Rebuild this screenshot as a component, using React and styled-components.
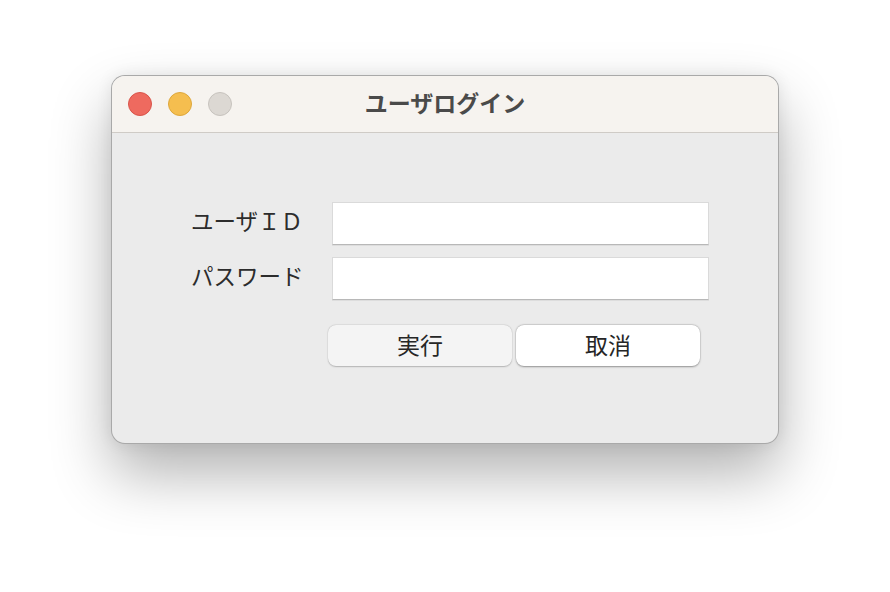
import React from "react";
import styled, { createGlobalStyle } from "styled-components";

const Global = createGlobalStyle`
  html, body { margin: 0; padding: 0; background: #ffffff; }
  body { font-family: "Noto Sans CJK JP", "Noto Sans", sans-serif; }
  * { box-sizing: border-box; }
`;

const Page = styled.div`
  width: 890px;
  height: 592px;
  padding: 75px 0 0 111px;
  background: #ffffff;
`;

const Window = styled.div`
  width: 668px;
  height: 369px;
  border-radius: 14px;
  background: #ebebeb;
  border: 1px solid rgba(0, 0, 0, 0.28);
  box-shadow: 0 30px 60px rgba(0, 0, 0, 0.3), 0 0 16px rgba(0, 0, 0, 0.08);
  overflow: hidden;
  display: flex;
  flex-direction: column;
`;

const TitleBar = styled.div`
  height: 57px;
  flex-shrink: 0;
  background: #f6f3ef;
  border-bottom: 1px solid #cfcbc6;
  display: flex;
  align-items: center;
  position: relative;
  padding-left: 16px;
`;

const Lights = styled.div`
  display: flex;
  gap: 16px;
`;

const Light = styled.span`
  width: 24px;
  height: 24px;
  border-radius: 50%;
  background: ${(p) => p.$bg};
  border: 1px solid ${(p) => p.$edge};
`;

const Title = styled.div`
  position: absolute;
  left: 0;
  right: 0;
  top: 0;
  bottom: 0;
  display: flex;
  align-items: center;
  justify-content: center;
  font-size: 23px;
  font-weight: 700;
  color: #4a4a4a;
  pointer-events: none;
  padding-bottom: 5px;
`;

const Body = styled.div`
  flex: 1;
  padding: 69px 0 0 79px;
  display: flex;
  flex-direction: column;
`;

const Form = styled.div`
  display: grid;
  grid-template-columns: 118px 377px;
  column-gap: 23px;
  row-gap: 12px;
  align-items: start;
`;

const Label = styled.label`
  font-size: 22.5px;
  color: #2c2c2c;
  line-height: 36px;
  white-space: nowrap;
`;

const Input = styled.div`
  height: 43px;
  background: #ffffff;
  border: 1px solid #dadada;
  border-bottom: 1px solid #b8b8b8;
  box-shadow: 0 1px 0 rgba(0, 0, 0, 0.06);
`;

const Buttons = styled.div`
  display: flex;
  gap: 4px;
  margin: 25px 0 0 137px;
`;

const Button = styled.div`
  width: 184px;
  height: 41px;
  border-radius: 8px;
  background: ${(p) => (p.$primary ? "#ffffff" : "#f4f4f4")};
  box-shadow: ${(p) =>
    p.$primary
      ? "0 0.5px 2px rgba(0,0,0,0.35), 0 0 0 0.5px rgba(0,0,0,0.08)"
      : "0 0.5px 1.5px rgba(0,0,0,0.22), 0 0 0 0.5px rgba(0,0,0,0.05)"};
  display: flex;
  align-items: center;
  justify-content: center;
  font-size: 23px;
  color: #262626;
  padding-bottom: 3px;
`;

export default function App() {
  return (
    <>
      <Global />
      <Page>
        <Window>
          <TitleBar>
            <Lights>
              <Light $bg="#ee6a5f" $edge="#d9544a" />
              <Light $bg="#f5be4f" $edge="#dea73b" />
              <Light $bg="#dcd8d3" $edge="#c7c3be" />
            </Lights>
            <Title>ユーザログイン</Title>
          </TitleBar>
          <Body>
            <Form>
              <Label>ユーザＩＤ</Label>
              <Input />
              <Label>パスワード</Label>
              <Input />
            </Form>
            <Buttons>
              <Button>実行</Button>
              <Button $primary>取消</Button>
            </Buttons>
          </Body>
        </Window>
      </Page>
    </>
  );
}
